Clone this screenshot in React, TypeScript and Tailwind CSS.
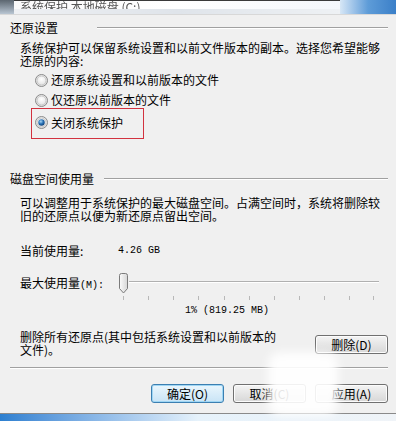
import React from "react";

const cjk = { fontFamily: '"Noto Sans CJK SC", "Noto Sans", sans-serif' };
const mono = { fontFamily: '"Liberation Mono", "Noto Sans CJK SC", monospace' };

function Radio({ checked }: { checked?: boolean }) {
  return (
    <svg width="13" height="13" viewBox="0 0 13 13" className="shrink-0">
      <defs>
        <radialGradient id={checked ? "rg1" : "rg0"} cx="0.5" cy="0.4" r="0.6">
          <stop offset="0" stopColor="#ffffff" />
          <stop offset="1" stopColor="#dcdcdc" />
        </radialGradient>
        <radialGradient id="dot" cx="0.4" cy="0.35" r="0.7">
          <stop offset="0" stopColor="#a9d8f5" />
          <stop offset="0.5" stopColor="#2b74b8" />
          <stop offset="1" stopColor="#0b3c73" />
        </radialGradient>
      </defs>
      <circle cx="6.5" cy="6.5" r="6" fill={`url(#${checked ? "rg1" : "rg0"})`} stroke="#8a8a8a" strokeWidth="1" />
      <circle cx="6.5" cy="6.5" r="4.5" fill="none" stroke="#c8c8c8" strokeWidth="1" />
      {checked && <circle cx="6.5" cy="6.5" r="3.2" fill="url(#dot)" />}
    </svg>
  );
}

function Thumb() {
  return (
    <svg width="11" height="21" viewBox="0 0 11 21" className="shrink-0">
      <defs>
        <linearGradient id="tg" x1="0" y1="0" x2="1" y2="0">
          <stop offset="0" stopColor="#fbfbfb" />
          <stop offset="1" stopColor="#d6d6d6" />
        </linearGradient>
      </defs>
      <path d="M1.5 2.5 Q1.5 0.5 3.5 0.5 L7.5 0.5 Q9.5 0.5 9.5 2.5 L9.5 15.5 L5.5 20 L1.5 15.5 Z" fill="url(#tg)" stroke="#7b7b7b" strokeWidth="1" />
    </svg>
  );
}

function Btn({ children, focus }: { children: React.ReactNode; focus?: boolean }) {
  return (
    <div
      className={`w-[73px] h-[19px] rounded-[3px] border flex items-center justify-center text-[12px] leading-none text-black ${
        focus
          ? "border-[#3c7fb1] bg-gradient-to-b from-[#eaf6fd] to-[#c9e4f6] shadow-[inset_0_0_0_1px_#9fd6f4]"
          : "border-[#707070] bg-gradient-to-b from-[#f4f4f4] to-[#d7d7d7] shadow-[inset_0_0_0_1px_#fcfcfc]"
      }`}
    >
      {children}
    </div>
  );
}

function Line() {
  return <div className="flex-1 h-[2px] border-t border-[#a0a0a0] border-b border-b-white" />;
}

export default function App() {
  const ticks = [123, 148, 173, 198, 224, 249, 274, 299, 324, 349, 373];
  return (
    <div className="relative w-[396px] h-[421px] bg-[#f0f0f0] overflow-hidden text-black text-[12px]" style={cjk}>
      {/* title bar */}
      <div className="h-[15px] flex overflow-hidden border-b border-[#d8d8d8]">
        <div className="w-[14px] h-full bg-gradient-to-b from-[#5c6670] to-[#b9c6d3]" />
        <div className="flex-1 h-full flex flex-col bg-gradient-to-r from-[#fafafa] via-[#ffffff] to-[#f4f7fb]">
          <div className="h-[1px] bg-[#3a3a3a]" />
          <div className="h-[8px] overflow-hidden pl-[6px] flex items-end">
            <span className="text-[12px] leading-[12px] text-[#555] blur-[0.4px] mb-[-4px]">系统保护 本地磁盘 (C:)</span>
          </div>
          <div className="flex-1 bg-gradient-to-r from-[#eef0f3] via-[#dfe4ea] to-[#eef1f4] blur-[0.6px]" />
        </div>
        <div className="w-[56px] h-full bg-gradient-to-r from-[#d7e7f6] via-[#5e9cd8] to-[#3a7fc8]" />
      </div>

      <div className="pl-[10px] pr-[8px]">
        {/* section 1 */}
        <div className="flex items-center mt-[6px] h-[14px]">
          <span className="leading-[14px]">还原设置</span>
          <div className="ml-[39px] flex-1 flex"><Line /></div>
        </div>
        <div className="pl-[10px] mt-[6px] leading-[13px]">
          <div>系统保护可以保留系统设置和以前文件版本的副本。选择您希望能够</div>
          <div>还原的内容:</div>
        </div>
        <div className="pl-[25px] mt-[6px] h-[14px] flex items-center gap-[3px]">
          <Radio />
          <span className="leading-[14px]">还原系统设置和以前版本的文件</span>
        </div>
        <div className="pl-[25px] mt-[6px] h-[14px] flex items-center gap-[3px]">
          <Radio />
          <span className="leading-[14px]">仅还原以前版本的文件</span>
        </div>
        <div className="ml-[21px] mt-[1px] w-[113px] h-[31px] border border-[#d2323f] pl-[3px] pt-[7px]">
          <div className="h-[13px] flex items-center gap-[3px]">
            <Radio checked />
            <span className="leading-[14px]">关闭系统保护</span>
          </div>
        </div>

        {/* section 2 */}
        <div className="flex items-center mt-[33px] h-[14px]">
          <span className="leading-[14px]">磁盘空间使用量</span>
          <div className="ml-[10px] flex-1 flex"><Line /></div>
        </div>
        <div className="pl-[10px] mt-[10px] leading-[13px]">
          <div>可以调整用于系统保护的最大磁盘空间。占满空间时，系统将删除较</div>
          <div>旧的还原点以便为新还原点留出空间。</div>
        </div>
        <div className="pl-[10px] mt-[22px] h-[13px] flex items-center">
          <span className="w-[98px] leading-[13px]">当前使用量:</span>
          <span className="text-[10px] leading-[13px]" style={mono}>4.26 GB</span>
        </div>
        <div className="pl-[10px] mt-[16px] h-[21px] flex items-center">
          <span className="w-[98px] leading-[13px]">
            最大使用量<span className="text-[10px]" style={mono}>(M):</span>
          </span>
          <Thumb />
          <div className="w-[250px] h-[2px] border-t border-[#b0b0b0] border-b border-b-white mt-[-4px]" />
        </div>
        <div className="relative h-[6px] mt-[2px]">
          {ticks.map((x) => (
            <div key={x} className="absolute top-0 w-px h-[4px] bg-[#b8b8b8]" style={{ left: x - 10 }} />
          ))}
        </div>
        <div className="pl-[175px] mt-[3px] h-[12px] text-[10px] leading-[12px]" style={mono}>
          1% (819.25 MB)
        </div>
        <div className="mt-[13px] flex items-start">
          <div className="pl-[10px] flex-1 leading-[13px]">
            <div>删除所有还原点(其中包括系统设置和以前版本的</div>
            <div>文件)。</div>
          </div>
          <div className="mt-[5px]">
            <Btn>删除(D)</Btn>
          </div>
        </div>
        <div className="mt-[11px] flex"><Line /></div>
        <div className="mt-[15px] flex justify-end gap-[9px]">
          <Btn focus>确定(O)</Btn>
          <Btn>取消(C)</Btn>
          <Btn>应用(A)</Btn>
        </div>
      </div>

      {/* bottom border + taskbar strip */}
      <div className="absolute left-0 right-0 top-[413px] h-px bg-[#8a8a8a]" />
      <div className="absolute left-0 right-0 top-[414px] h-[7px] bg-gradient-to-r from-[#2c7fd0] via-[#e6f2fb] to-[#f0f4f8]" />

      {/* watermark blob */}
      <div className="absolute left-[268px] top-[352px] w-[70px] h-[64px] rounded-[12px] bg-white/90 blur-[5px]" />
    </div>
  );
}
